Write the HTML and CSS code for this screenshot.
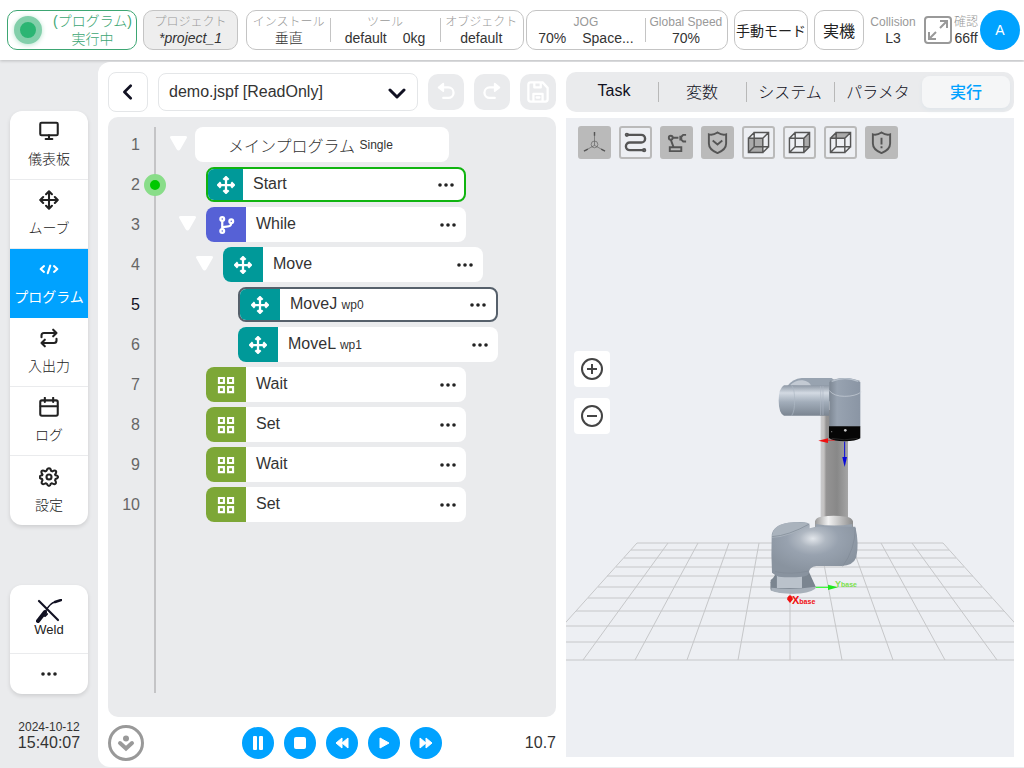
FILE: index.html
```html
<!DOCTYPE html>
<html lang="ja">
  <head>
    <meta charset="UTF-8" />
    <meta name="viewport" content="width=device-width, initial-scale=1.0" />
    <title>demo.jspf</title>
    <link rel="stylesheet" href="styles.css">
  </head>

  <body>
    <!-- shared icons -->
    <svg class="sprite" aria-hidden="true">
      <symbol id="i-move" viewBox="0 0 24 24">
        <path d="M12 2v20M2 12h20M8.500 5L12 1.500 15.500 5M8.500 19l3.500 3.500 3.500-3.500M5 8.500L1.500 12 5 15.500M19 8.500l3.500 3.500-3.500 3.500" />
      </symbol>
      <symbol id="i-grid" viewBox="0 0 24 24">
        <path d="M3.500 3.500h6v6h-6zM14.500 3.500h6v6h-6zM3.500 14.500h6v6h-6zM14.500 14.500h6v6h-6z" />
      </symbol>
      <symbol id="i-branch" viewBox="0 0 24 24">
        <path d="M7 7v10M19 9c0 5-3 5-6 5-3 0-6 0-6 3" />
        <circle cx="7" cy="4" r="2.500" /><circle cx="7" cy="20" r="2.500" /><circle cx="19" cy="7" r="2.500" />
      </symbol>
      <symbol id="i-dots" viewBox="0 0 16 4">
        <circle cx="2" cy="2" r="1.800" /><circle cx="8" cy="2" r="1.800" /><circle cx="14" cy="2" r="1.800" />
      </symbol>
      <symbol id="i-caret" viewBox="0 0 17 15">
        <path d="M2 0h13q3 0 1.500 2.500L10.500 13q-2 3-4 0L.5 2.500Q-1 0 2 0z" />
      </symbol>
      <symbol id="i-cube" viewBox="0 0 24 24">
        <path d="M1.500 7.500h15v15h-15zM7.500 1.500h15v15h-15zM1.500 7.500l6-6M16.500 7.500l6-6M1.500 22.500l6-6M16.500 22.500l6-6" />
      </symbol>
      <symbol id="i-shield" viewBox="0 0 24 24">
        <path d="M3 3.500c3 1 6 0 9-2 3 2 6 3 9 2V13c0 5-4 8-9 10-5-2-9-5-9-10z" />
      </symbol>
    </svg>

    <header class="topbar">
      <div class="box status">
        <span class="lamp"></span>
        <span class="status-text">(プログラム)<br>実行中</span>
      </div>
      <div class="box info project">
        <span class="label">プロジェクト</span>
        <em>*project_1</em>
      </div>
      <div class="settings">
        <div class="box group setup">
          <div class="info"><span class="label">インストール</span><span>垂直</span></div>
          <div class="info"><span class="label">ツール</span><span class="pair"><span>default</span><span>0kg</span></span></div>
          <div class="info"><span class="label">オブジェクト</span><span>default</span></div>
        </div>
        <div class="box group jog">
          <div class="info"><span class="label">JOG</span><span class="pair"><span>70%</span><span>Space...</span></span></div>
          <div class="info"><span class="label">Global Speed</span><span>70%</span></div>
        </div>
      </div>
      <button class="box mode">手動モード</button>
      <button class="box real">実機</button>
      <div class="info"><span class="label">Collision</span><span>L3</span></div>
      <div class="session">
        <button class="fullscreen" aria-label="Fullscreen">
          <svg viewBox="0 0 28 28" fill="none" stroke="#999" stroke-width="2">
            <rect x="1" y="1" width="26" height="26" rx="3" />
            <path d="M16 5h7v7M23 5l-7 7M5 16v7h7M5 23l7-7" />
          </svg>
        </button>
        <div class="info"><span class="label">確認</span><span>66ff</span></div>
        <button class="avatar">A</button>
      </div>
    </header>

    <div class="main">
      <aside class="sidebar">
        <nav class="menu">
          <a href="#" class="menu-item">
            <svg viewBox="0 0 24 24"><rect x="1.500" y="2" width="21" height="15" rx="1.500" /><path d="M12 17v4M8 21.500h8" /></svg>
            儀表板
          </a>
          <a href="#" class="menu-item"><svg><use href="#i-move" /></svg>ムーブ</a>
          <a href="#" class="menu-item active">
            <svg viewBox="0 0 24 24"><path d="M6 8.500L2 12l4 3.500M18 8.500l4 3.500-4 3.500M13.500 8l-3 9" /></svg>
            プログラム
          </a>
          <a href="#" class="menu-item">
            <svg viewBox="0 0 24 24"><path d="M17 2l4 4-4 4M3 11V9q0-3 3-3h15M7 22l-4-4 4-4M21 13v2q0 3-3 3H3" /></svg>
            入出力
          </a>
          <a href="#" class="menu-item">
            <svg viewBox="0 0 24 24"><rect x="1.500" y="4" width="21" height="18.500" rx="2" /><path d="M2 11h20M7 1v5M17 1v5" /></svg>
            ログ
          </a>
          <a href="#" class="menu-item">
            <svg viewBox="0 0 24 24"><circle cx="12" cy="12" r="3" /><path d="M12 1.500q2 0 2.500 3l1.500.7q3-1.700 4.200-.4t-.9 4.200l.5 1q3 .5 3 2t-3 2.500l-.5 1.500q1.800 3 .4 4.200t-4.200-.7l-1.500.7q-.5 2.500-2 2.500t-2.500-2.500l-1.500-.7q-2.800 1.900-4.200.7t.4-4.200L3.700 14.500q-3-1-3-2.500t3-2l.5-1q-2.100-2.900-.9-4.200t4.200.4L9 4.500q1-3 3-3z" /></svg>
            設定
          </a>
        </nav>
        <nav class="menu extra">
          <a href="#" class="menu-item weld">
            <svg viewBox="0 0 26 24"><path d="M3 2l19 19" stroke-width="2.200" /><path d="M2 22l7-9" stroke-width="4" /><path d="M9 13q5-9 10-10" stroke-width="1.500" /><path d="M19 3l6-2" stroke-width="2.500" /><path d="M9 17l2-2" stroke-width="2" /></svg>
            Weld
          </a>
          <a href="#" class="menu-item more" aria-label="More"><svg class="dots"><use href="#i-dots" /></svg></a>
        </nav>
        <div class="clock"><span class="date">2024-10-12</span><span>15:40:07</span></div>
      </aside>

      <main class="workspace">
        <!-- program tree -->
        <section class="program">
          <div class="toolbar">
            <button class="back" aria-label="Back"><svg viewBox="0 0 16 18"><path d="M11 2L4 9l7 7" /></svg></button>
            <div class="file-select">
              <select aria-label="Program file"><option>demo.jspf [ReadOnly]</option></select>
              <svg viewBox="0 0 18 12"><path d="M2 2l7 7 7-7" /></svg>
            </div>
            <button class="tool" aria-label="Undo" disabled><svg viewBox="0 0 24 24"><path d="M8 7h6.500a5 5 0 0 1 0 11.500H9" /><path class="head" d="M9 3L4 7l5 4z" /></svg></button>
            <button class="tool" aria-label="Redo" disabled><svg viewBox="0 0 24 24"><path d="M16 7H9.500a5 5 0 0 0 0 11.500H15" /><path class="head" d="M15 3l5 4-5 4z" /></svg></button>
            <button class="tool" aria-label="Save" disabled><svg viewBox="0 0 24 24"><path d="M1.500 4q0-2.500 2.500-2.500h13l5.500 6V20q0 2.500-2.500 2.500H4q-2.500 0-2.500-2.500zM7 22v-8h10v8M8 2v5h7V2M10.500 18h3" /></svg></button>
          </div>

          <div class="tree">
            <ol class="rows">
              <li class="row">
                <span class="num">1</span><span class="mark"></span>
                <svg class="caret"><use href="#i-caret" /></svg>
                <div class="node root">メインプログラム <small>Single</small></div>
              </li>
              <li class="row level-1">
                <span class="num">2</span><span class="mark"><i class="cursor"></i></span>
                <span class="caret"></span>
                <div class="node move running"><span class="type"><svg><use href="#i-move" /></svg></span><span class="name">Start</span><button class="opts" aria-label="Options"><svg class="dots"><use href="#i-dots" /></svg></button></div>
              </li>
              <li class="row level-1">
                <span class="num">3</span><span class="mark"></span>
                <svg class="caret"><use href="#i-caret" /></svg>
                <div class="node flow"><span class="type"><svg><use href="#i-branch" /></svg></span><span class="name">While</span><button class="opts" aria-label="Options"><svg class="dots"><use href="#i-dots" /></svg></button></div>
              </li>
              <li class="row level-2">
                <span class="num">4</span><span class="mark"></span>
                <svg class="caret"><use href="#i-caret" /></svg>
                <div class="node move"><span class="type"><svg><use href="#i-move" /></svg></span><span class="name">Move</span><button class="opts" aria-label="Options"><svg class="dots"><use href="#i-dots" /></svg></button></div>
              </li>
              <li class="row level-3 current">
                <span class="num">5</span><span class="mark"></span>
                <span class="caret"></span>
                <div class="node move selected"><span class="type"><svg><use href="#i-move" /></svg></span><span class="name">MoveJ <small>wp0</small></span><button class="opts" aria-label="Options"><svg class="dots"><use href="#i-dots" /></svg></button></div>
              </li>
              <li class="row level-3">
                <span class="num">6</span><span class="mark"></span>
                <span class="caret"></span>
                <div class="node move"><span class="type"><svg><use href="#i-move" /></svg></span><span class="name">MoveL <small>wp1</small></span><button class="opts" aria-label="Options"><svg class="dots"><use href="#i-dots" /></svg></button></div>
              </li>
              <li class="row level-1">
                <span class="num">7</span><span class="mark"></span>
                <span class="caret"></span>
                <div class="node basic"><span class="type"><svg><use href="#i-grid" /></svg></span><span class="name">Wait</span><button class="opts" aria-label="Options"><svg class="dots"><use href="#i-dots" /></svg></button></div>
              </li>
              <li class="row level-1">
                <span class="num">8</span><span class="mark"></span>
                <span class="caret"></span>
                <div class="node basic"><span class="type"><svg><use href="#i-grid" /></svg></span><span class="name">Set</span><button class="opts" aria-label="Options"><svg class="dots"><use href="#i-dots" /></svg></button></div>
              </li>
              <li class="row level-1">
                <span class="num">9</span><span class="mark"></span>
                <span class="caret"></span>
                <div class="node basic"><span class="type"><svg><use href="#i-grid" /></svg></span><span class="name">Wait</span><button class="opts" aria-label="Options"><svg class="dots"><use href="#i-dots" /></svg></button></div>
              </li>
              <li class="row level-1">
                <span class="num">10</span><span class="mark"></span>
                <span class="caret"></span>
                <div class="node basic"><span class="type"><svg><use href="#i-grid" /></svg></span><span class="name">Set</span><button class="opts" aria-label="Options"><svg class="dots"><use href="#i-dots" /></svg></button></div>
              </li>
            </ol>
          </div>

          <div class="player">
            <button class="collapse" aria-label="Collapse">
              <svg viewBox="0 0 36 36"><circle cx="18" cy="18" r="16.500" fill="none" stroke="#999" stroke-width="3" /><circle cx="18" cy="13.500" r="3" fill="#999" /><path d="M12 18l6 5.500 6-5.500" fill="none" stroke="#999" stroke-width="4" stroke-linecap="round" /></svg>
            </button>
            <div class="controls">
              <button aria-label="Pause"><svg viewBox="0 0 16 16"><rect x="3" y="1" width="4" height="14" rx="1" /><rect x="9" y="1" width="4" height="14" rx="1" /></svg></button>
              <button aria-label="Stop"><svg viewBox="0 0 16 16"><rect x="2" y="2" width="12" height="12" rx="2" /></svg></button>
              <button aria-label="Step back"><svg viewBox="0 0 16 16"><path d="M8 3v10L2 8zM14 3v10L8 8z" /></svg></button>
              <button aria-label="Play"><svg viewBox="0 0 16 16"><path d="M4 3l9 5-9 5z" /></svg></button>
              <button aria-label="Step forward"><svg viewBox="0 0 16 16"><path d="M2 3v10l6-5zM8 3v10l6-5z" /></svg></button>
            </div>
            <span class="elapsed">10.7</span>
          </div>
        </section>

        <!-- 3D view -->
        <section class="view">
          <nav class="tabs">
            <button>Task</button>
            <button>変数</button>
            <button>システム</button>
            <button>パラメタ</button>
            <button class="active">実行</button>
          </nav>
          <div class="stage">
            <svg class="scene" viewBox="0 0 448 639" preserveAspectRatio="xMidYMid slice">
              <defs>
                <linearGradient id="tube" x1="0" y1="0" x2="0" y2="1">
                  <stop offset="0" stop-color="#8f99a6" /><stop offset=".25" stop-color="#d3dae3" /><stop offset=".55" stop-color="#a2adba" /><stop offset="1" stop-color="#7b8591" />
                </linearGradient>
                <linearGradient id="post" x1="0" y1="0" x2="1" y2="0">
                  <stop offset="0" stop-color="#c9c9cb" /><stop offset=".12" stop-color="#c4c2c1" /><stop offset=".2" stop-color="#959494" /><stop offset=".6" stop-color="#888" /><stop offset="1" stop-color="#a5a5a5" />
                </linearGradient>
                <linearGradient id="head" x1="0" y1="0" x2="1" y2="0">
                  <stop offset="0" stop-color="#7d8793" /><stop offset=".25" stop-color="#98a3b1" /><stop offset="1" stop-color="#8a95a4" />
                </linearGradient>
                <radialGradient id="joint" cx=".48" cy=".3" r=".6">
                  <stop offset="0" stop-color="#e2e6eb" /><stop offset=".25" stop-color="#b0b8c2" /><stop offset=".5" stop-color="#98a2af" /><stop offset="1" stop-color="#89939f" />
                </radialGradient>
                <linearGradient id="ring" x1="0" y1="0" x2="1" y2="0">
                  <stop offset="0" stop-color="#999" /><stop offset=".35" stop-color="#f2f2f2" /><stop offset="1" stop-color="#8c8c8c" />
                </linearGradient>
              </defs>
              <!-- floor -->
              <path class="floor" d="M71 425H377M65 432H383M58 440H390M50 449H398M41 458H407M32 469H416M22 480H426M10 493H438M-3 508H451M-17 524H465M-34 542H482M71 425L-34 542M102 425L17 542M132 425L69 542M163 425L121 542M193 425L172 542M224 425V542M254 425L276 542M285 425L327 542M315 425L379 542M346 425L431 542M377 425L482 542" />
              <!-- robot arm, drawn at 3x -->
              <g transform="translate(174 242) scale(.3333)">
                <path d="M242 150h82v335h-82z" fill="url(#post)" />
                <path d="M140 80Q158 56 185 54h90l40 30v40H140z" fill="#98a3b0" />
                <path d="M150 76q18-17 38-15 20 2 28 20z" fill="#c3cad3" />
                <path d="M132 76h135v91H132q-16-8-16-45t16-46z" fill="url(#tube)" />
                <path d="M155 76q9 12 9 45t-9 46M242 78v87M249 78v87" fill="none" stroke="#aeb8c4" stroke-width="2" />
                <path d="M268 82V66q12-11 45-12 36 1 48 12v134h-93z" fill="url(#head)" />
                <path d="M268 92q14 17 46 17t50-13" fill="none" stroke="#cbd2db" stroke-width="2" />
                <path d="M275 64q40-16 80 0" fill="none" stroke="#b7c0cb" stroke-width="4" />
                <path d="M267 199h94v36q-14 9-47 9t-47-10z" fill="#060606" />
                <path d="M275 235q38 9 78 0" fill="none" stroke="#444" stroke-width="1.500" />
                <circle cx="316" cy="211" r="4" fill="#ccc" /><circle cx="275" cy="215" r="2" fill="#777" />
                <path d="M225 484q2-12 20-14 36-6 73 0 18 2 21 14v19q-57 10-114 0z" fill="url(#ring)" />
                <path d="M227 492q56 9 110 0v18H227z" fill="#98a2ae" />
                <path d="M105 645l-13 22v24q25 9 67 9 50-2 68-20l-20-44z" fill="#78828d" />
                <path d="M110 642h76v42h-76z" fill="#bac2cb" />
                <path d="M92 660l18-14v38l-18 3zM186 640l18-2 22 42-40 8z" fill="#7b8590" />
                <path d="M94 683q65 8 132-3v6q-20 15-67 15-44 0-65-9z" fill="#a7b0ba" />
                <path d="M95 530q0-38 66-43 46-4 48 8v10q20-8 45-5h92q12 50 3 92-9 25-45 26h-75q-22 2-23 22-1 8-20 10-35 4-70 0-11-4-20-12-3-50-1-108z" fill="url(#joint)" />
                <path d="M96 533q54 0 112-40-12-9-64-5-48 6-48 45z" fill="#aab3bd" />
                <path d="M96 530q50-3 112-38" fill="none" stroke="#7d8894" stroke-width="2" />
                <path d="M346 504q-1 65-38 115M105 635q50 10 101-2" fill="none" stroke="#808a96" stroke-width="2" />
                <path d="M284 241h-26" stroke="#f01010" stroke-width="2" /><path d="M264 235v14l-29-7z" fill="#f01010" />
                <path d="M314 245v50" stroke="#0808dc" stroke-width="3" /><path d="M307 291h14l-7 30z" fill="#0808dc" />
                <path d="M227 682h40" stroke="#1aff1a" stroke-width="3" /><path d="M264 674v16l30-8z" fill="#1de81d" />
                <path d="M143 712q7-12 14 0l2 6-9 11-9-11z" fill="#f01010" />
              </g>
              <text x="226" y="486" class="axis x">X<tspan>base</tspan></text>
              <text x="269" y="469" class="axis y">Y<tspan>base</tspan></text>
            </svg>
            <div class="view-tools">
              <button class="on" aria-label="Axes"><svg viewBox="0 0 24 24" stroke-width="1" stroke-opacity=".6"><path d="M12 3v12M12 15l-9 5M12 15l9 5" /><circle cx="12" cy="14" r="3.500" /><path d="M12 1v4M1 21l4-2M23 21l-4-2" stroke-width="1.500" stroke-opacity="1" /></svg></button>
              <button aria-label="Path"><svg viewBox="0 0 24 24" stroke-width="2.500"><path d="M3 4h15a4 4 0 0 1 0 8H6a4 4 0 0 0 0 8h15" /><circle cx="3" cy="4" r="1" /><circle cx="21" cy="20" r="1" /></svg></button>
              <button class="on" aria-label="Robot"><svg viewBox="0 0 24 24" stroke-width="2"><path d="M5 17h12v4H5zM9 17L6 9M8 7h6M16 5v5M22 4h-3l-2 2v3l2 2h3" /><circle cx="6" cy="7" r="2" /></svg></button>
              <button class="on" aria-label="Safety"><svg viewBox="0 0 24 24" stroke-width="2"><use href="#i-shield" width="24" height="24" /><path d="M7 10l5 4 5-4" /></svg></button>
              <button aria-label="Front view"><svg viewBox="0 0 24 24" stroke-width="1.500"><path class="face" d="M1.500 7.500h15v15h-15z" /><use href="#i-cube" width="24" height="24" /></svg></button>
              <button aria-label="Side view"><svg viewBox="0 0 24 24" stroke-width="1.500"><path class="face" d="M16.500 7.500l6-6v15l-6 6z" /><use href="#i-cube" width="24" height="24" /></svg></button>
              <button aria-label="Top view"><svg viewBox="0 0 24 24" stroke-width="1.500"><path class="face" d="M1.500 7.500l6-6h15l-6 6z" /><use href="#i-cube" width="24" height="24" /></svg></button>
              <button class="on" aria-label="Warning"><svg viewBox="0 0 24 24" stroke-width="2"><use href="#i-shield" width="24" height="24" /><path d="M12 7v7M12 16v2" /></svg></button>
            </div>
            <div class="zoom">
              <button aria-label="Zoom in"><svg viewBox="0 0 24 24"><circle cx="12" cy="12" r="10" /><path d="M7 12h10M12 7v10" /></svg></button>
              <button aria-label="Zoom out"><svg viewBox="0 0 24 24"><circle cx="12" cy="12" r="10" /><path d="M7 12h10" /></svg></button>
            </div>
          </div>
        </section>
      </main>
    </div>
  </body>
</html>
```

FILE: styles.css
```css
* {
  box-sizing: border-box;
}

body {
  margin: 0;
  min-height: 100vh;
  display: flex;
  flex-direction: column;
  background: #eaebed;
  color: #333;
  font-family: "Liberation Sans", "Noto Sans CJK JP", sans-serif;
  font-size: 14px;
  font-weight: 300;
}

button,
select {
  margin: 0;
  padding: 0;
  border: 0;
  background: none;
  color: inherit;
  font: inherit;
}

svg {
  display: block;
}

symbol {
  overflow: visible;
}

.sprite {
  position: absolute;
  width: 0;
  height: 0;
}

.dots {
  width: 16px;
  height: 4px;
  fill: #222;
  stroke: none;
}

/* top bar */
.topbar {
  display: grid;
  grid-template-columns: 130fr 95fr 484fr 74fr 50fr 46fr 98px;
  gap: 6px;
  padding: 10px 4px 10px 7px;
  background: #fff;
  box-shadow: 0 1px 3px rgba(0, 0, 0, 0.2);
  white-space: nowrap;
}

.topbar > * {
  min-width: 0;
  height: 40px;
}

.box {
  border: 1px solid #c4c4c4;
  border-radius: 10px;
}

.status {
  display: flex;
  align-items: center;
  justify-content: space-between;
  padding: 0 4px 0 6px;
  border-color: #3da673;
  color: #3da673;
  line-height: 18px;
  text-align: center;
}

.lamp {
  width: 28px;
  height: 28px;
  border: 6px solid #82cfaa;
  border-radius: 50%;
  background: #2bb573;
  box-shadow: 0 1px 5px #b9e5cf;
}

.info {
  display: flex;
  flex-direction: column;
  align-items: center;
  justify-content: center;
  line-height: 16px;
}

.label {
  font-size: 12px;
  color: #999;
}

.project {
  background: #eee;
}

.settings {
  display: grid;
  grid-template-columns: 278fr 202fr;
  gap: 2px;
  padding-left: 2px;
}

.group {
  display: grid;
  align-items: center;
}

.setup {
  grid-template-columns: 84fr 110fr 84fr;
}

.jog {
  grid-template-columns: 119fr 83fr;
}

.group .info + .info {
  background: linear-gradient(#c4c4c4, #c4c4c4) left center / 1px 24px no-repeat;
}

.pair {
  display: flex;
  gap: 16px;
}

.mode,
.real {
  color: #222;
  font-weight: 400;
}

.real {
  font-size: 16px;
}

.session {
  display: flex;
  align-items: center;
  justify-content: flex-end;
  gap: 2px;
}

.fullscreen {
  width: 28px;
}

.avatar {
  width: 40px;
  height: 40px;
  border-radius: 50%;
  background: #00a2ff;
  color: #fff;
}

/* sidebar */
.main {
  flex: 1;
  display: flex;
  padding-top: 2px;
}

.sidebar {
  width: 98px;
  padding: 49px 10px 0;
  display: flex;
  flex-direction: column;
}

.menu {
  border-radius: 12px;
  background: #fff;
  box-shadow: 0 2px 4px rgba(0, 0, 0, 0.12);
  overflow: hidden;
}

.menu-item {
  height: 69px;
  display: flex;
  flex-direction: column;
  align-items: center;
  justify-content: center;
  gap: 8px;
  border-bottom: 1px solid #eaebed;
  color: #222;
  line-height: 20px;
  text-decoration: none;
  white-space: nowrap;
}

.menu-item:last-child {
  border-bottom: 0;
}

.menu-item svg:not(.dots) {
  width: 20px;
  height: 20px;
  fill: none;
  stroke: #222;
  stroke-width: 2.5;
  stroke-linejoin: round;
  stroke-linecap: round;
}

.menu-item.active {
  border-color: #00a2ff;
  background: #00a2ff;
  color: #fff;
  font-weight: 400;
}

.menu-item.active svg:not(.dots) {
  stroke: #fff;
}

.extra {
  margin-top: 60px;
}

.menu-item.weld {
  gap: 0;
  padding-bottom: 3px;
  font-size: 13px;
  line-height: 14px;
}

.menu-item.weld svg {
  width: 26px;
  height: 24px;
  stroke: #111122;
}

.menu-item.more {
  height: 40px;
}

.clock {
  display: flex;
  flex-direction: column;
  align-items: center;
  margin-top: 25px;
  font-size: 16px;
  line-height: 16px;
}

.date {
  font-size: 12px;
}

/* workspace */
.workspace {
  flex: 1;
  min-width: 0;
  display: grid;
  grid-template-columns: 1fr 1fr;
  gap: 10px;
  margin-bottom: 1px;
  padding: 10px 10px 0;
  border-radius: 12px 0 0 12px;
  background: #fff;
}

.program,
.view {
  min-width: 0;
  display: flex;
  flex-direction: column;
}

.toolbar {
  display: flex;
  align-items: center;
  gap: 10px;
}

.toolbar svg {
  fill: none;
  stroke: #111122;
  stroke-width: 3;
  stroke-linecap: round;
  stroke-linejoin: round;
}

.back {
  width: 40px;
  height: 40px;
  display: grid;
  place-items: center;
  border: 1px solid #e4e6e8;
  border-radius: 8px;
}

.back svg {
  width: 16px;
  height: 16px;
}

.file-select {
  position: relative;
  flex: 1;
  height: 38px;
}

.file-select select {
  appearance: none;
  width: 100%;
  height: 100%;
  padding: 0 40px 2px 10px;
  border: 1px solid #e4e6e8;
  border-radius: 8px;
  font-size: 16px;
}

.file-select svg {
  position: absolute;
  top: 15px;
  right: 12px;
  width: 18px;
  height: 12px;
  pointer-events: none;
}

.tool {
  width: 36px;
  height: 36px;
  display: grid;
  place-items: center;
  border-radius: 10px;
  background: #eaebed;
}

.tool svg {
  width: 22px;
  height: 22px;
  stroke: #fff;
  stroke-width: 2.5;
}

.tool .head {
  fill: #fff;
  stroke-width: 2;
}

.tree {
  flex: 1;
  display: flex;
  margin-top: 5px;
  padding: 10px 0 24px;
  border-radius: 10px;
  background: #eaebed;
}

.rows {
  flex: 1;
  display: flex;
  flex-direction: column;
  gap: 5px;
  margin: 0;
  padding: 0;
  list-style: none;
  background: linear-gradient(#c4c4c6, #c4c4c6) 46px 0 / 2px 100% no-repeat;
}

.row {
  height: 35px;
  display: flex;
  align-items: center;
  font-size: 16px;
}

.num {
  width: 32px;
  color: #666;
  text-align: right;
}

.current .num {
  color: #111122;
}

.mark {
  width: 30px;
  display: grid;
  place-items: center;
}

.cursor {
  width: 22px;
  height: 22px;
  border: 6px solid #89dd89;
  border-radius: 50%;
  background: #00c800;
}

.caret {
  width: 17px;
  height: 15px;
  margin: 0 8px 3px 0;
  fill: #fff;
}

.level-1 .caret {
  margin-left: 9px;
  margin-right: 10px;
}

.level-2 .caret {
  margin-left: 26px;
  margin-right: 10px;
}

.level-3 .caret {
  margin-left: 43px;
}

.node {
  width: 260px;
  height: 100%;
  display: flex;
  align-items: center;
  border-radius: 8px;
  background: #fff;
  overflow: hidden;
}

.node small {
  font-size: 12px;
}

.node.root {
  width: 254px;
  padding-left: 33px;
  white-space: pre;
}

.node.running {
  border: 2px solid #10b410;
}

.node.selected {
  border: 2px solid #56606b;
}

.type {
  width: 40px;
  height: 100%;
  display: grid;
  place-items: center;
}

.running .type {
  width: 35px;
}

.type svg {
  width: 18px;
  height: 18px;
  fill: none;
  stroke: #fff;
  stroke-width: 3;
}

.move .type {
  background: #009999;
}

.flow .type {
  background: #5661d6;
}

.basic .type {
  background: #7da737;
}

.basic .type svg {
  width: 20px;
  height: 20px;
  stroke-width: 2.5;
}

.name {
  flex: 1;
  padding: 0 10px 2px;
}

.opts {
  padding: 8px 10px;
}

/* player */
.player {
  height: 50px;
  display: grid;
  grid-template-columns: 1fr auto 1fr;
  align-items: center;
  padding-top: 2px;
}

.collapse {
  width: 36px;
  height: 36px;
}

.controls {
  display: flex;
  gap: 10px;
  margin-left: 20px;
}

.controls button {
  width: 32px;
  height: 32px;
  display: grid;
  place-items: center;
  border-radius: 50%;
  background: #00a2ff;
}

.controls svg {
  width: 16px;
  height: 16px;
  fill: #fff;
  stroke: #fff;
  stroke-linejoin: round;
}

.controls rect {
  stroke: none;
}

.elapsed {
  font-size: 16px;
  text-align: right;
}

/* 3D view */
.tabs {
  height: 40px;
  display: grid;
  grid-template-columns: repeat(5, 1fr);
  padding: 4px;
  border-radius: 10px;
  background: #eaebed;
  color: #111122;
  font-size: 16px;
}

.tabs button {
  padding-bottom: 2px;
}

.tabs button + button {
  background: linear-gradient(#b8b8b8, #b8b8b8) left center / 1px 20px no-repeat;
}

.tabs .active,
.tabs button + .active {
  border-radius: 8px;
  background: #f5f6f7;
  box-shadow: 0 2px 4px #dfe5ea;
  color: #00a2ff;
  font-weight: 500;
}

.stage {
  flex: 1;
  position: relative;
  margin: 6px 0 10px;
  padding: 8px;
  display: flex;
  flex-direction: column;
  align-items: flex-start;
  background: #edeff3;
}

.scene {
  position: absolute;
  inset: 0;
  width: 100%;
  height: 100%;
}

.floor {
  fill: none;
  stroke: #c6c7c9;
}

.axis {
  font-size: 11px;
  font-weight: bold;
}

.axis tspan {
  font-size: 7px;
}

.axis.x {
  fill: #f01010;
}

.axis.y {
  font-size: 9px;
  fill: #7be04c;
}

.view-tools {
  position: relative;
  display: flex;
  gap: 8px;
  padding-left: 4px;
}

.view-tools button {
  width: 33px;
  height: 33px;
  display: grid;
  place-items: center;
  border: 2px solid #bababa;
  border-radius: 3px;
}

.view-tools .on {
  background: #bababa;
}

.view-tools svg {
  width: 23px;
  height: 23px;
  fill: none;
  stroke: #555;
}

.view-tools .face {
  fill: #aaa;
  stroke: none;
}

.zoom {
  position: relative;
  display: flex;
  flex-direction: column;
  gap: 11px;
  margin: auto 0;
  padding-bottom: 124px;
}

.zoom button {
  width: 36px;
  height: 36px;
  display: grid;
  place-items: center;
  border-radius: 4px;
  background: #fff;
}

.zoom svg {
  width: 24px;
  height: 24px;
  fill: none;
  stroke: #444;
  stroke-width: 2;
}
```
